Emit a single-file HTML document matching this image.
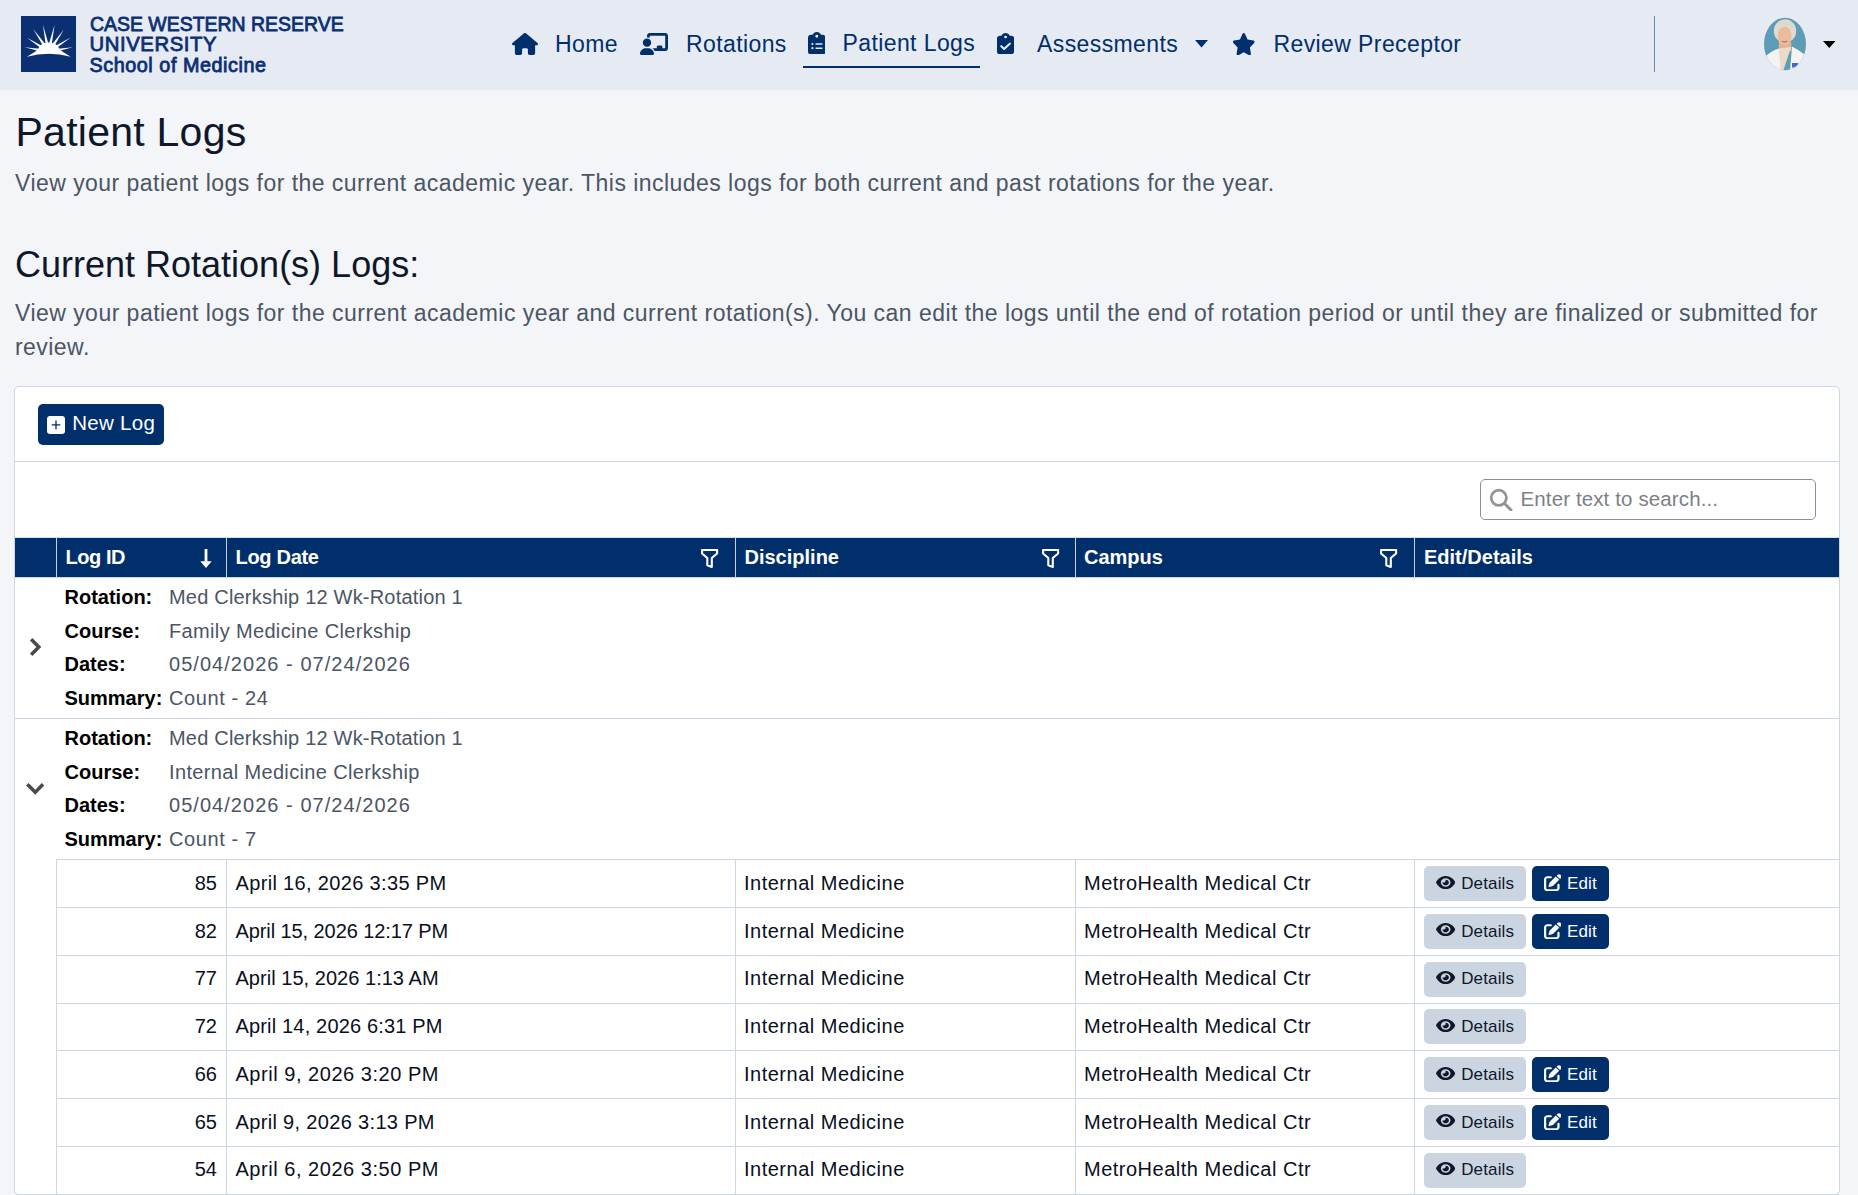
<!DOCTYPE html>
<html><head><meta charset="utf-8"><style>
*{box-sizing:border-box;margin:0;padding:0}
html,body{width:1858px;height:1195px;overflow:hidden}
body{background:#f4f5f9;font-family:"Liberation Sans",sans-serif;position:relative}
.t{position:absolute;white-space:nowrap;line-height:1}
.ic{position:absolute;display:block}
.bx{position:absolute}
</style></head><body>
<div class="bx" style="left:0;top:0;width:1858px;height:89.6px;background:#e6eaf2"></div>
<svg class="ic" style="left:21px;top:16px;width:55px;height:56px" viewBox="0 0 55 56"><rect width="55" height="56" fill="#0b2f73"/><polygon fill="#fff" points="3.6,31.3 28.0,33.7 27.4,37.5"/><polygon fill="#fff" points="6.0,21.7 28.7,34.0 26.7,37.2"/><polygon fill="#fff" points="12.2,13.1 29.3,34.5 26.1,36.7"/><polygon fill="#fff" points="21.9,8.8 29.6,35.2 25.8,36.0"/><polygon fill="#fff" points="33.6,8.8 29.6,36.0 25.8,35.2"/><polygon fill="#fff" points="42.7,13.7 29.3,36.7 26.1,34.5"/><polygon fill="#fff" points="49.7,21.4 28.7,37.2 26.7,34.0"/><polygon fill="#fff" points="51.8,31.3 28.0,37.5 27.4,33.7"/>
<path fill="#fff" d="M5.9 40.7 Q16 35 17 33 A11.5 10 0 0 1 38.5 33 Q40 35 49.7 40.7 Q27.7 34.8 5.9 40.7Z"/></svg>
<div class="t" style="left:89.5px;top:13.5px;font-size:20.3px;color:#0b2f73;font-weight:normal;-webkit-text-stroke:0.8px #0b2f73;letter-spacing:0px;transform:scaleX(0.959);transform-origin:0 0">CASE WESTERN RESERVE</div>

<div class="t" style="left:89.5px;top:34.2px;font-size:20.3px;color:#0b2f73;font-weight:normal;-webkit-text-stroke:0.8px #0b2f73;letter-spacing:0.6px">UNIVERSITY</div>

<div class="t" style="left:89.5px;top:56.0px;font-size:19.8px;color:#0b2f73;font-weight:normal;-webkit-text-stroke:0.8px #0b2f73;letter-spacing:0.55px">School of Medicine</div>

<svg class="ic" style="left:511.5px;top:32.6px;width:26px;height:22px;" viewBox="0 0 576 512" preserveAspectRatio="none"><path fill="#002f6c" d="M575.8 255.5c0 18-15 32.1-32 32.1h-32l.7 160.2c0 2.7-.2 5.4-.5 8.1V472c0 22.1-17.9 40-40 40H456c-1.1 0-2.2 0-3.3-.1c-1.4 .1-2.8 .1-4.2 .1H416 392c-22.1 0-40-17.9-40-40V448 384c0-17.7-14.3-32-32-32H256c-17.7 0-32 14.3-32 32v64 24c0 22.1-17.9 40-40 40H160 128.1c-1.5 0-3-.1-4.5-.2c-1.2 .1-2.4 .2-3.6 .2H104c-22.1 0-40-17.9-40-40V360c0-.9 0-1.9 .1-2.8V287.6H32c-18 0-32-14-32-32.1c0-9 3-17 10-24L266.4 8c7-7 15-8 22-8s15 2 21 7L564.8 231.5c8 7 12 15 11 24z"/></svg>

<div class="t" style="left:555px;top:32.5px;font-size:23px;color:#002f6c;font-weight:normal;letter-spacing:0.4px">Home</div>

<svg class="ic" style="left:640px;top:33px;width:28px;height:22px;" viewBox="0 0 640 512" preserveAspectRatio="none"><path fill="#002f6c" d="M160 64c0-35.3 28.7-64 64-64H576c35.3 0 64 28.7 64 64V352c0 35.3-28.7 64-64 64H336.8c-11.8-25.5-29.9-47.5-52.4-64H384V320c0-17.7 14.3-32 32-32h64c17.7 0 32 14.3 32 32v32h64V64L224 64v49.1C205.2 102.2 183.3 96 160 96V64zm0 64a96 96 0 1 1 0 192 96 96 0 1 1 0-192zM133.3 352h53.3C260.3 352 320 411.7 320 485.3c0 14.7-11.9 26.7-26.7 26.7H26.7C11.9 512 0 500.1 0 485.3C0 411.7 59.7 352 133.3 352z"/></svg>

<div class="t" style="left:686px;top:32.5px;font-size:23px;color:#002f6c;font-weight:normal;letter-spacing:0.4px">Rotations</div>

<svg class="ic" style="left:807.6px;top:31.5px;width:17.6px;height:22.5px;" viewBox="0 0 384 512" preserveAspectRatio="none"><path fill="#002f6c" d="M192 0c-41.8 0-77.4 26.7-90.5 64H64C28.7 64 0 92.7 0 128V448c0 35.3 28.7 64 64 64H320c35.3 0 64-28.7 64-64V128c0-35.3-28.7-64-64-64H282.5C269.4 26.7 233.8 0 192 0zm0 64a32 32 0 1 1 0 64 32 32 0 1 1 0-64zM72 272a24 24 0 1 1 48 0 24 24 0 1 1 -48 0zm104-16H304c8.8 0 16 7.2 16 16s-7.2 16-16 16H176c-8.8 0-16-7.2-16-16s7.2-16 16-16zM72 368a24 24 0 1 1 48 0 24 24 0 1 1 -48 0zm88 0c0-8.8 7.2-16 16-16H304c8.8 0 16 7.2 16 16s-7.2 16-16 16H176c-8.8 0-16-7.2-16-16z"/></svg>

<div class="t" style="left:842.5px;top:31.5px;font-size:23px;color:#002f6c;font-weight:normal;letter-spacing:0.4px">Patient Logs</div>

<div class="bx" style="left:803px;top:65.5px;width:177px;height:2.5px;background:#002f6c"></div>
<svg class="ic" style="left:996.7px;top:33px;width:17.2px;height:21.3px;" viewBox="0 0 384 512" preserveAspectRatio="none"><path fill="#002f6c" d="M192 0c-41.8 0-77.4 26.7-90.5 64H64C28.7 64 0 92.7 0 128V448c0 35.3 28.7 64 64 64H320c35.3 0 64-28.7 64-64V128c0-35.3-28.7-64-64-64H282.5C269.4 26.7 233.8 0 192 0zm0 64a32 32 0 1 1 0 64 32 32 0 1 1 0-64zM305 273L177 401c-9.4 9.4-24.6 9.4-33.9 0L79 337c-9.4-9.4-9.4-24.6 0-33.9s24.6-9.4 33.9 0l47 47L271 239c9.4-9.4 24.6-9.4 33.9 0s9.4 24.6 0 33.9z"/></svg>

<div class="t" style="left:1037px;top:32.5px;font-size:23px;color:#002f6c;font-weight:normal;letter-spacing:0.4px">Assessments</div>

<svg class="ic" style="left:1195px;top:40px;width:13px;height:7.5px" viewBox="0 0 13 7.5"><path fill="#002f6c" d="M0 0H13L6.5 7.5Z"/></svg>
<svg class="ic" style="left:1231.5px;top:32.8px;width:23.5px;height:22.4px;" viewBox="0 0 576 512" preserveAspectRatio="none"><path fill="#002f6c" d="M316.9 18C311.6 7 300.4 0 288.1 0s-23.4 7-28.8 18L195 150.3 51.4 171.5c-12 1.8-22 10.2-25.7 21.7s-.7 24.2 7.9 32.7L137.8 329 113.2 474.7c-2 12 3 24.2 12.9 31.3s23 8 33.8 2.3l128.3-68.5 128.3 68.5c10.8 5.7 23.9 4.9 33.8-2.3s14.9-19.3 12.9-31.3L438.5 329 542.7 225.9c8.6-8.5 11.7-21.2 7.9-32.7s-13.7-19.9-25.7-21.7L381.2 150.3 316.9 18z"/></svg>

<div class="t" style="left:1273.5px;top:32.5px;font-size:23px;color:#002f6c;font-weight:normal;letter-spacing:0.4px">Review Preceptor</div>

<div class="bx" style="left:1654px;top:16px;width:1px;height:56px;background:#6f86b6"></div>
<svg class="ic" style="left:1763px;top:17px;width:44px;height:54px" viewBox="0 0 44 54">
<defs><clipPath id="av"><ellipse cx="22" cy="27" rx="21" ry="26.2"/></clipPath></defs>
<g clip-path="url(#av)">
<rect width="44" height="54" fill="#5d9cb6"/>
<ellipse cx="22" cy="14" rx="11.2" ry="11.8" fill="#dedbd3"/>
<rect x="15.8" y="25" width="12.4" height="9" fill="#dfb395"/>
<ellipse cx="21.6" cy="19" rx="7" ry="9.4" fill="#e9bd9c"/>
<path d="M13 14 Q15 3 23 3.5 Q31 4 31.5 13 Q26 8 21 9.5 Q16 10 13 14Z" fill="#dcd9d0"/>
<path d="M19 24.3 Q21.6 25.6 24.2 24.3" stroke="#c2605a" stroke-width="1.1" fill="none"/>
<path d="M0 40 L3.4 38.5 Q10 33 16 31.5 L19.5 53 L27 54 L29 29.4 Q36 33 41.5 37.4 L44 40 V54 H0Z" fill="#f3f3f1"/>
<path d="M16 31.5 L28.5 29.8 L25.5 38 L20.5 53 L17.5 53Z" fill="#eadbc7"/>
<rect x="29" y="46" width="6" height="4.5" fill="#4f63c4"/>
</g></svg>
<svg class="ic" style="left:1822.5px;top:40.5px;width:12.5px;height:7px" viewBox="0 0 12.5 7"><path fill="#000" d="M0 0H12.5L6.25 7Z"/></svg>
<div class="t" style="left:15.5px;top:111.8px;font-size:41px;color:#0f172a;font-weight:normal;letter-spacing:0.25px">Patient Logs</div>

<div class="t" style="left:15px;top:172.2px;font-size:23px;color:#4b5563;font-weight:normal;letter-spacing:0.46px">View your patient logs for the current academic year. This includes logs for both current and past rotations for the year.</div>

<div class="t" style="left:15px;top:246.7px;font-size:36px;color:#0f172a;font-weight:normal;">Current Rotation(s) Logs:</div>

<div class="t" style="left:15px;top:302.1px;font-size:23px;color:#4b5563;font-weight:normal;letter-spacing:0.466px">View your patient logs for the current academic year and current rotation(s). You can edit the logs until the end of rotation period or until they are finalized or submitted for</div>

<div class="t" style="left:15px;top:335.9px;font-size:23px;color:#4b5563;font-weight:normal;letter-spacing:0.45px">review.</div>

<div class="bx" style="left:14px;top:386px;width:1826px;height:809px;background:#fff;border:1px solid #cdd6e3;border-radius:5px"></div>
<div class="bx" style="left:15px;top:461px;width:1824px;height:1px;background:#cdd6e3"></div>
<div class="bx" style="left:38px;top:404px;width:126px;height:40.5px;background:#002f6c;border-radius:5px"></div>
<svg class="ic" style="left:47px;top:415.5px;width:18px;height:18px" viewBox="0 0 18 18"><rect width="18" height="18" rx="3" fill="#fff"/><path d="M9 4.6V13.2M4.7 8.9H13.3" stroke="#002f6c" stroke-width="1.3"/></svg>
<div class="t" style="left:72.2px;top:412.8px;font-size:20.5px;color:#fff;font-weight:normal;letter-spacing:0.3px">New Log</div>

<div class="bx" style="left:1480px;top:479px;width:336px;height:41px;border:1px solid #8c8f94;border-radius:5px;background:#fff"></div>
<svg class="ic" style="left:1489px;top:487.5px;width:24px;height:23px" viewBox="0 0 24 23"><circle cx="9.8" cy="9.8" r="7.6" fill="none" stroke="#949494" stroke-width="2.8"/><path d="M15.3 15.3L22 22" stroke="#949494" stroke-width="3" stroke-linecap="round"/></svg>
<div class="t" style="left:1520.5px;top:489.1px;font-size:20.5px;color:#7b7f86;font-weight:normal;letter-spacing:0.12px">Enter text to search...</div>

<div class="bx" style="left:15px;top:538px;width:1824px;height:39px;background:#002f6c"></div>
<div class="bx" style="left:15px;top:537px;width:1824px;height:1px;background:#d9dfe8"></div>
<div class="bx" style="left:15px;top:577px;width:1824px;height:1px;background:#cdd6e3"></div>
<div class="bx" style="left:56px;top:537px;width:1px;height:41px;background:#c9d1de"></div>
<div class="bx" style="left:226px;top:537px;width:1px;height:41px;background:#c9d1de"></div>
<div class="bx" style="left:735px;top:537px;width:1px;height:41px;background:#c9d1de"></div>
<div class="bx" style="left:1075px;top:537px;width:1px;height:41px;background:#c9d1de"></div>
<div class="bx" style="left:1414px;top:537px;width:1px;height:41px;background:#c9d1de"></div>
<div class="t" style="left:65.5px;top:547.0px;font-size:20px;color:#fff;font-weight:bold;letter-spacing:-0.45px">Log ID</div>

<div class="t" style="left:235.5px;top:547.0px;font-size:20px;color:#fff;font-weight:bold;letter-spacing:-0.3px">Log Date</div>

<div class="t" style="left:744.5px;top:547.0px;font-size:20px;color:#fff;font-weight:bold;">Discipline</div>

<div class="t" style="left:1084px;top:547.0px;font-size:20px;color:#fff;font-weight:bold;">Campus</div>

<div class="t" style="left:1424px;top:547.0px;font-size:20px;color:#fff;font-weight:bold;">Edit/Details</div>

<svg class="ic" style="left:200px;top:548.5px;width:12px;height:19px" viewBox="0 0 12 19"><path d="M6 0V14" stroke="#fff" stroke-width="2.8"/><path d="M0.3 12.2L6 19L11.7 12.2Z" fill="#fff"/></svg>
<svg class="ic" style="left:700.9px;top:548.5px;width:18px;height:20px" viewBox="0 0 18 20"><path d="M1.1 1H16.1V4.5L10.8 9V18L6.3 16.3V9L1.1 4.5Z" fill="none" stroke="#fff" stroke-width="2.1" stroke-linejoin="round"/></svg>
<svg class="ic" style="left:1041.5px;top:548.5px;width:18px;height:20px" viewBox="0 0 18 20"><path d="M1.1 1H16.1V4.5L10.8 9V18L6.3 16.3V9L1.1 4.5Z" fill="none" stroke="#fff" stroke-width="2.1" stroke-linejoin="round"/></svg>
<svg class="ic" style="left:1380.1px;top:548.5px;width:18px;height:20px" viewBox="0 0 18 20"><path d="M1.1 1H16.1V4.5L10.8 9V18L6.3 16.3V9L1.1 4.5Z" fill="none" stroke="#fff" stroke-width="2.1" stroke-linejoin="round"/></svg>
<div class="t" style="left:64.5px;top:587.2px;font-size:20px;color:#000;font-weight:bold;">Rotation:</div>

<div class="t" style="left:169px;top:587.2px;font-size:20px;color:#4b5563;font-weight:normal;letter-spacing:0.2px">Med Clerkship 12 Wk-Rotation 1</div>

<div class="t" style="left:64.5px;top:621.0px;font-size:20px;color:#000;font-weight:bold;">Course:</div>

<div class="t" style="left:169px;top:621.0px;font-size:20px;color:#4b5563;font-weight:normal;letter-spacing:0.35px">Family Medicine Clerkship</div>

<div class="t" style="left:64.5px;top:654.1px;font-size:20px;color:#000;font-weight:bold;">Dates:</div>

<div class="t" style="left:169px;top:654.1px;font-size:20px;color:#4b5563;font-weight:normal;letter-spacing:1.04px">05/04/2026 - 07/24/2026</div>

<div class="t" style="left:64.5px;top:687.7px;font-size:20px;color:#000;font-weight:bold;">Summary:</div>

<div class="t" style="left:169px;top:687.7px;font-size:20px;color:#4b5563;font-weight:normal;letter-spacing:0.6px">Count - 24</div>

<svg class="ic" style="left:0;top:0px;width:60px;height:700px" viewBox="0 0 60 700"><polygon fill="#4a4a4a" points="32.4,638.0 41.27,647.1 32.4,656.1 29.9,653.6 36.4,647.1 29.9,640.6"/></svg>
<div class="bx" style="left:15px;top:718px;width:1824px;height:1px;background:#cdd6e3"></div>
<div class="t" style="left:64.5px;top:728.2px;font-size:20px;color:#000;font-weight:bold;">Rotation:</div>

<div class="t" style="left:169px;top:728.2px;font-size:20px;color:#4b5563;font-weight:normal;letter-spacing:0.2px">Med Clerkship 12 Wk-Rotation 1</div>

<div class="t" style="left:64.5px;top:762.0px;font-size:20px;color:#000;font-weight:bold;">Course:</div>

<div class="t" style="left:169px;top:762.0px;font-size:20px;color:#4b5563;font-weight:normal;letter-spacing:0.35px">Internal Medicine Clerkship</div>

<div class="t" style="left:64.5px;top:795.1px;font-size:20px;color:#000;font-weight:bold;">Dates:</div>

<div class="t" style="left:169px;top:795.1px;font-size:20px;color:#4b5563;font-weight:normal;letter-spacing:1.04px">05/04/2026 - 07/24/2026</div>

<div class="t" style="left:64.5px;top:828.7px;font-size:20px;color:#000;font-weight:bold;">Summary:</div>

<div class="t" style="left:169px;top:828.7px;font-size:20px;color:#4b5563;font-weight:normal;letter-spacing:0.6px">Count - 7</div>

<svg class="ic" style="left:0;top:0px;width:60px;height:860px" viewBox="0 0 60 860"><polygon fill="#4a4a4a" points="26.04,785.56 28.55,783.05 35.35,789.75 41.77,783.05 44.28,785.56 35.25,794.77"/></svg>
<div class="bx" style="left:56px;top:859px;width:1px;height:340px;background:#cdd6e3"></div>
<div class="bx" style="left:226px;top:859px;width:1px;height:340px;background:#cdd6e3"></div>
<div class="bx" style="left:735px;top:859px;width:1px;height:340px;background:#cdd6e3"></div>
<div class="bx" style="left:1075px;top:859px;width:1px;height:340px;background:#cdd6e3"></div>
<div class="bx" style="left:1414px;top:859px;width:1px;height:340px;background:#cdd6e3"></div>
<div class="bx" style="left:56px;top:859px;width:1783px;height:1px;background:#cdd6e3"></div>
<div class="bx" style="left:56px;top:907px;width:1783px;height:1px;background:#cdd6e3"></div>
<div class="bx" style="left:56px;top:955px;width:1783px;height:1px;background:#cdd6e3"></div>
<div class="bx" style="left:56px;top:1003px;width:1783px;height:1px;background:#cdd6e3"></div>
<div class="bx" style="left:56px;top:1050px;width:1783px;height:1px;background:#cdd6e3"></div>
<div class="bx" style="left:56px;top:1098px;width:1783px;height:1px;background:#cdd6e3"></div>
<div class="bx" style="left:56px;top:1146px;width:1783px;height:1px;background:#cdd6e3"></div>
<div class="bx" style="left:56px;top:1194px;width:1783px;height:1px;background:#cdd6e3"></div>
<div class="t" style="left:101px;width:116px;text-align:right;top:872.80px;font-size:20px;color:#0a0f1c">85</div>
<div class="t" style="left:235.5px;top:872.8px;font-size:20px;color:#0a0f1c;font-weight:normal;letter-spacing:0.34px">April 16, 2026 3:35 PM</div>

<div class="t" style="left:744px;top:872.8px;font-size:20px;color:#0a0f1c;font-weight:normal;letter-spacing:0.5px">Internal Medicine</div>

<div class="t" style="left:1084px;top:872.8px;font-size:20px;color:#0a0f1c;font-weight:normal;letter-spacing:0.5px">MetroHealth Medical Ctr</div>

<div class="bx" style="left:1424px;top:866.1px;width:102px;height:35px;background:#cbd5e1;border-radius:5px"></div>
<svg class="ic" style="left:1435.7px;top:874.7px;width:19.3px;height:15px;" viewBox="0 0 576 512" preserveAspectRatio="none"><path fill="#0f172a" d="M288 32c-80.8 0-145.5 36.8-192.6 80.6C48.6 156 17.3 208 2.5 243.7c-3.3 7.9-3.3 16.7 0 24.6C17.3 304 48.6 356 95.4 399.4C142.5 443.2 207.2 480 288 480s145.5-36.8 192.6-80.6c46.8-43.5 78.1-95.4 93-131.1c3.3-7.9 3.3-16.7 0-24.6c-14.9-35.7-46.2-87.7-93-131.1C433.5 68.8 368.8 32 288 32zM144 256a144 144 0 1 1 288 0 144 144 0 1 1 -288 0zm144-64c0 35.3-28.7 64-64 64c-7.1 0-13.9-1.2-20.3-3.3c-5.5-1.8-11.9 1.6-11.7 7.4c.3 6.9 1.3 13.8 3.2 20.7c13.7 51.2 66.4 81.6 117.6 67.9s81.6-66.4 67.9-117.6c-11.1-41.5-47.8-69.4-88.6-71.1c-5.8-.2-9.2 6.1-7.4 11.7c2.1 6.4 3.3 13.2 3.3 20.3z"/></svg>

<div class="t" style="left:1461.2px;top:875.0px;font-size:17px;color:#0f172a;font-weight:normal;letter-spacing:0.15px">Details</div>

<div class="bx" style="left:1532px;top:866.1px;width:77px;height:35px;background:#002f6c;border-radius:5px"></div>
<svg class="ic" style="left:1543.7px;top:873.9px;width:17.8px;height:17.3px;" viewBox="0 0 512 512" preserveAspectRatio="none"><path fill="#fff" d="M471.6 21.7c-21.9-21.9-57.3-21.9-79.2 0L362.3 51.7l97.9 97.9 30.1-30.1c21.9-21.9 21.9-57.3 0-79.2L471.6 21.7zm-299.2 220c-6.1 6.1-10.8 13.6-13.5 21.9l-29.6 88.8c-2.9 8.6-.6 18.1 5.8 24.6s15.9 8.7 24.6 5.8l88.8-29.6c8.2-2.7 15.7-7.4 21.9-13.5L437.7 172.3 339.7 74.3 172.4 241.7zM96 64C43 64 0 107 0 160V416c0 53 43 96 96 96H352c53 0 96-43 96-96V320c0-17.7-14.3-32-32-32s-32 14.3-32 32v96c0 17.7-14.3 32-32 32H96c-17.7 0-32-14.3-32-32V160c0-17.7 14.3-32 32-32h96c17.7 0 32-14.3 32-32s-14.3-32-32-32H96z"/></svg>

<div class="t" style="left:1567px;top:875.0px;font-size:17px;color:#fff;font-weight:normal;letter-spacing:0.15px">Edit</div>

<div class="t" style="left:101px;width:116px;text-align:right;top:920.54px;font-size:20px;color:#0a0f1c">82</div>
<div class="t" style="left:235.5px;top:920.54px;font-size:20px;color:#0a0f1c;font-weight:normal;letter-spacing:-0.086px">April 15, 2026 12:17 PM</div>

<div class="t" style="left:744px;top:920.54px;font-size:20px;color:#0a0f1c;font-weight:normal;letter-spacing:0.5px">Internal Medicine</div>

<div class="t" style="left:1084px;top:920.54px;font-size:20px;color:#0a0f1c;font-weight:normal;letter-spacing:0.5px">MetroHealth Medical Ctr</div>

<div class="bx" style="left:1424px;top:913.84px;width:102px;height:35px;background:#cbd5e1;border-radius:5px"></div>
<svg class="ic" style="left:1435.7px;top:922.44px;width:19.3px;height:15px;" viewBox="0 0 576 512" preserveAspectRatio="none"><path fill="#0f172a" d="M288 32c-80.8 0-145.5 36.8-192.6 80.6C48.6 156 17.3 208 2.5 243.7c-3.3 7.9-3.3 16.7 0 24.6C17.3 304 48.6 356 95.4 399.4C142.5 443.2 207.2 480 288 480s145.5-36.8 192.6-80.6c46.8-43.5 78.1-95.4 93-131.1c3.3-7.9 3.3-16.7 0-24.6c-14.9-35.7-46.2-87.7-93-131.1C433.5 68.8 368.8 32 288 32zM144 256a144 144 0 1 1 288 0 144 144 0 1 1 -288 0zm144-64c0 35.3-28.7 64-64 64c-7.1 0-13.9-1.2-20.3-3.3c-5.5-1.8-11.9 1.6-11.7 7.4c.3 6.9 1.3 13.8 3.2 20.7c13.7 51.2 66.4 81.6 117.6 67.9s81.6-66.4 67.9-117.6c-11.1-41.5-47.8-69.4-88.6-71.1c-5.8-.2-9.2 6.1-7.4 11.7c2.1 6.4 3.3 13.2 3.3 20.3z"/></svg>

<div class="t" style="left:1461.2px;top:922.74px;font-size:17px;color:#0f172a;font-weight:normal;letter-spacing:0.15px">Details</div>

<div class="bx" style="left:1532px;top:913.84px;width:77px;height:35px;background:#002f6c;border-radius:5px"></div>
<svg class="ic" style="left:1543.7px;top:921.64px;width:17.8px;height:17.3px;" viewBox="0 0 512 512" preserveAspectRatio="none"><path fill="#fff" d="M471.6 21.7c-21.9-21.9-57.3-21.9-79.2 0L362.3 51.7l97.9 97.9 30.1-30.1c21.9-21.9 21.9-57.3 0-79.2L471.6 21.7zm-299.2 220c-6.1 6.1-10.8 13.6-13.5 21.9l-29.6 88.8c-2.9 8.6-.6 18.1 5.8 24.6s15.9 8.7 24.6 5.8l88.8-29.6c8.2-2.7 15.7-7.4 21.9-13.5L437.7 172.3 339.7 74.3 172.4 241.7zM96 64C43 64 0 107 0 160V416c0 53 43 96 96 96H352c53 0 96-43 96-96V320c0-17.7-14.3-32-32-32s-32 14.3-32 32v96c0 17.7-14.3 32-32 32H96c-17.7 0-32-14.3-32-32V160c0-17.7 14.3-32 32-32h96c17.7 0 32-14.3 32-32s-14.3-32-32-32H96z"/></svg>

<div class="t" style="left:1567px;top:922.74px;font-size:17px;color:#fff;font-weight:normal;letter-spacing:0.15px">Edit</div>

<div class="t" style="left:101px;width:116px;text-align:right;top:968.28px;font-size:20px;color:#0a0f1c">77</div>
<div class="t" style="left:235.5px;top:968.28px;font-size:20px;color:#0a0f1c;font-weight:normal;letter-spacing:0.033px">April 15, 2026 1:13 AM</div>

<div class="t" style="left:744px;top:968.28px;font-size:20px;color:#0a0f1c;font-weight:normal;letter-spacing:0.5px">Internal Medicine</div>

<div class="t" style="left:1084px;top:968.28px;font-size:20px;color:#0a0f1c;font-weight:normal;letter-spacing:0.5px">MetroHealth Medical Ctr</div>

<div class="bx" style="left:1424px;top:961.58px;width:102px;height:35px;background:#cbd5e1;border-radius:5px"></div>
<svg class="ic" style="left:1435.7px;top:970.18px;width:19.3px;height:15px;" viewBox="0 0 576 512" preserveAspectRatio="none"><path fill="#0f172a" d="M288 32c-80.8 0-145.5 36.8-192.6 80.6C48.6 156 17.3 208 2.5 243.7c-3.3 7.9-3.3 16.7 0 24.6C17.3 304 48.6 356 95.4 399.4C142.5 443.2 207.2 480 288 480s145.5-36.8 192.6-80.6c46.8-43.5 78.1-95.4 93-131.1c3.3-7.9 3.3-16.7 0-24.6c-14.9-35.7-46.2-87.7-93-131.1C433.5 68.8 368.8 32 288 32zM144 256a144 144 0 1 1 288 0 144 144 0 1 1 -288 0zm144-64c0 35.3-28.7 64-64 64c-7.1 0-13.9-1.2-20.3-3.3c-5.5-1.8-11.9 1.6-11.7 7.4c.3 6.9 1.3 13.8 3.2 20.7c13.7 51.2 66.4 81.6 117.6 67.9s81.6-66.4 67.9-117.6c-11.1-41.5-47.8-69.4-88.6-71.1c-5.8-.2-9.2 6.1-7.4 11.7c2.1 6.4 3.3 13.2 3.3 20.3z"/></svg>

<div class="t" style="left:1461.2px;top:970.48px;font-size:17px;color:#0f172a;font-weight:normal;letter-spacing:0.15px">Details</div>

<div class="t" style="left:101px;width:116px;text-align:right;top:1016.02px;font-size:20px;color:#0a0f1c">72</div>
<div class="t" style="left:235.5px;top:1016.02px;font-size:20px;color:#0a0f1c;font-weight:normal;letter-spacing:0.167px">April 14, 2026 6:31 PM</div>

<div class="t" style="left:744px;top:1016.02px;font-size:20px;color:#0a0f1c;font-weight:normal;letter-spacing:0.5px">Internal Medicine</div>

<div class="t" style="left:1084px;top:1016.02px;font-size:20px;color:#0a0f1c;font-weight:normal;letter-spacing:0.5px">MetroHealth Medical Ctr</div>

<div class="bx" style="left:1424px;top:1009.32px;width:102px;height:35px;background:#cbd5e1;border-radius:5px"></div>
<svg class="ic" style="left:1435.7px;top:1017.92px;width:19.3px;height:15px;" viewBox="0 0 576 512" preserveAspectRatio="none"><path fill="#0f172a" d="M288 32c-80.8 0-145.5 36.8-192.6 80.6C48.6 156 17.3 208 2.5 243.7c-3.3 7.9-3.3 16.7 0 24.6C17.3 304 48.6 356 95.4 399.4C142.5 443.2 207.2 480 288 480s145.5-36.8 192.6-80.6c46.8-43.5 78.1-95.4 93-131.1c3.3-7.9 3.3-16.7 0-24.6c-14.9-35.7-46.2-87.7-93-131.1C433.5 68.8 368.8 32 288 32zM144 256a144 144 0 1 1 288 0 144 144 0 1 1 -288 0zm144-64c0 35.3-28.7 64-64 64c-7.1 0-13.9-1.2-20.3-3.3c-5.5-1.8-11.9 1.6-11.7 7.4c.3 6.9 1.3 13.8 3.2 20.7c13.7 51.2 66.4 81.6 117.6 67.9s81.6-66.4 67.9-117.6c-11.1-41.5-47.8-69.4-88.6-71.1c-5.8-.2-9.2 6.1-7.4 11.7c2.1 6.4 3.3 13.2 3.3 20.3z"/></svg>

<div class="t" style="left:1461.2px;top:1018.22px;font-size:17px;color:#0f172a;font-weight:normal;letter-spacing:0.15px">Details</div>

<div class="t" style="left:101px;width:116px;text-align:right;top:1063.76px;font-size:20px;color:#0a0f1c">66</div>
<div class="t" style="left:235.5px;top:1063.76px;font-size:20px;color:#0a0f1c;font-weight:normal;letter-spacing:0.53px">April 9, 2026 3:20 PM</div>

<div class="t" style="left:744px;top:1063.76px;font-size:20px;color:#0a0f1c;font-weight:normal;letter-spacing:0.5px">Internal Medicine</div>

<div class="t" style="left:1084px;top:1063.76px;font-size:20px;color:#0a0f1c;font-weight:normal;letter-spacing:0.5px">MetroHealth Medical Ctr</div>

<div class="bx" style="left:1424px;top:1057.06px;width:102px;height:35px;background:#cbd5e1;border-radius:5px"></div>
<svg class="ic" style="left:1435.7px;top:1065.66px;width:19.3px;height:15px;" viewBox="0 0 576 512" preserveAspectRatio="none"><path fill="#0f172a" d="M288 32c-80.8 0-145.5 36.8-192.6 80.6C48.6 156 17.3 208 2.5 243.7c-3.3 7.9-3.3 16.7 0 24.6C17.3 304 48.6 356 95.4 399.4C142.5 443.2 207.2 480 288 480s145.5-36.8 192.6-80.6c46.8-43.5 78.1-95.4 93-131.1c3.3-7.9 3.3-16.7 0-24.6c-14.9-35.7-46.2-87.7-93-131.1C433.5 68.8 368.8 32 288 32zM144 256a144 144 0 1 1 288 0 144 144 0 1 1 -288 0zm144-64c0 35.3-28.7 64-64 64c-7.1 0-13.9-1.2-20.3-3.3c-5.5-1.8-11.9 1.6-11.7 7.4c.3 6.9 1.3 13.8 3.2 20.7c13.7 51.2 66.4 81.6 117.6 67.9s81.6-66.4 67.9-117.6c-11.1-41.5-47.8-69.4-88.6-71.1c-5.8-.2-9.2 6.1-7.4 11.7c2.1 6.4 3.3 13.2 3.3 20.3z"/></svg>

<div class="t" style="left:1461.2px;top:1065.96px;font-size:17px;color:#0f172a;font-weight:normal;letter-spacing:0.15px">Details</div>

<div class="bx" style="left:1532px;top:1057.06px;width:77px;height:35px;background:#002f6c;border-radius:5px"></div>
<svg class="ic" style="left:1543.7px;top:1064.86px;width:17.8px;height:17.3px;" viewBox="0 0 512 512" preserveAspectRatio="none"><path fill="#fff" d="M471.6 21.7c-21.9-21.9-57.3-21.9-79.2 0L362.3 51.7l97.9 97.9 30.1-30.1c21.9-21.9 21.9-57.3 0-79.2L471.6 21.7zm-299.2 220c-6.1 6.1-10.8 13.6-13.5 21.9l-29.6 88.8c-2.9 8.6-.6 18.1 5.8 24.6s15.9 8.7 24.6 5.8l88.8-29.6c8.2-2.7 15.7-7.4 21.9-13.5L437.7 172.3 339.7 74.3 172.4 241.7zM96 64C43 64 0 107 0 160V416c0 53 43 96 96 96H352c53 0 96-43 96-96V320c0-17.7-14.3-32-32-32s-32 14.3-32 32v96c0 17.7-14.3 32-32 32H96c-17.7 0-32-14.3-32-32V160c0-17.7 14.3-32 32-32h96c17.7 0 32-14.3 32-32s-14.3-32-32-32H96z"/></svg>

<div class="t" style="left:1567px;top:1065.96px;font-size:17px;color:#fff;font-weight:normal;letter-spacing:0.15px">Edit</div>

<div class="t" style="left:101px;width:116px;text-align:right;top:1111.50px;font-size:20px;color:#0a0f1c">65</div>
<div class="t" style="left:235.5px;top:1111.5px;font-size:20px;color:#0a0f1c;font-weight:normal;letter-spacing:0.335px">April 9, 2026 3:13 PM</div>

<div class="t" style="left:744px;top:1111.5px;font-size:20px;color:#0a0f1c;font-weight:normal;letter-spacing:0.5px">Internal Medicine</div>

<div class="t" style="left:1084px;top:1111.5px;font-size:20px;color:#0a0f1c;font-weight:normal;letter-spacing:0.5px">MetroHealth Medical Ctr</div>

<div class="bx" style="left:1424px;top:1104.8px;width:102px;height:35px;background:#cbd5e1;border-radius:5px"></div>
<svg class="ic" style="left:1435.7px;top:1113.4px;width:19.3px;height:15px;" viewBox="0 0 576 512" preserveAspectRatio="none"><path fill="#0f172a" d="M288 32c-80.8 0-145.5 36.8-192.6 80.6C48.6 156 17.3 208 2.5 243.7c-3.3 7.9-3.3 16.7 0 24.6C17.3 304 48.6 356 95.4 399.4C142.5 443.2 207.2 480 288 480s145.5-36.8 192.6-80.6c46.8-43.5 78.1-95.4 93-131.1c3.3-7.9 3.3-16.7 0-24.6c-14.9-35.7-46.2-87.7-93-131.1C433.5 68.8 368.8 32 288 32zM144 256a144 144 0 1 1 288 0 144 144 0 1 1 -288 0zm144-64c0 35.3-28.7 64-64 64c-7.1 0-13.9-1.2-20.3-3.3c-5.5-1.8-11.9 1.6-11.7 7.4c.3 6.9 1.3 13.8 3.2 20.7c13.7 51.2 66.4 81.6 117.6 67.9s81.6-66.4 67.9-117.6c-11.1-41.5-47.8-69.4-88.6-71.1c-5.8-.2-9.2 6.1-7.4 11.7c2.1 6.4 3.3 13.2 3.3 20.3z"/></svg>

<div class="t" style="left:1461.2px;top:1113.7px;font-size:17px;color:#0f172a;font-weight:normal;letter-spacing:0.15px">Details</div>

<div class="bx" style="left:1532px;top:1104.8px;width:77px;height:35px;background:#002f6c;border-radius:5px"></div>
<svg class="ic" style="left:1543.7px;top:1112.6px;width:17.8px;height:17.3px;" viewBox="0 0 512 512" preserveAspectRatio="none"><path fill="#fff" d="M471.6 21.7c-21.9-21.9-57.3-21.9-79.2 0L362.3 51.7l97.9 97.9 30.1-30.1c21.9-21.9 21.9-57.3 0-79.2L471.6 21.7zm-299.2 220c-6.1 6.1-10.8 13.6-13.5 21.9l-29.6 88.8c-2.9 8.6-.6 18.1 5.8 24.6s15.9 8.7 24.6 5.8l88.8-29.6c8.2-2.7 15.7-7.4 21.9-13.5L437.7 172.3 339.7 74.3 172.4 241.7zM96 64C43 64 0 107 0 160V416c0 53 43 96 96 96H352c53 0 96-43 96-96V320c0-17.7-14.3-32-32-32s-32 14.3-32 32v96c0 17.7-14.3 32-32 32H96c-17.7 0-32-14.3-32-32V160c0-17.7 14.3-32 32-32h96c17.7 0 32-14.3 32-32s-14.3-32-32-32H96z"/></svg>

<div class="t" style="left:1567px;top:1113.7px;font-size:17px;color:#fff;font-weight:normal;letter-spacing:0.15px">Edit</div>

<div class="t" style="left:101px;width:116px;text-align:right;top:1159.24px;font-size:20px;color:#0a0f1c">54</div>
<div class="t" style="left:235.5px;top:1159.24px;font-size:20px;color:#0a0f1c;font-weight:normal;letter-spacing:0.53px">April 6, 2026 3:50 PM</div>

<div class="t" style="left:744px;top:1159.24px;font-size:20px;color:#0a0f1c;font-weight:normal;letter-spacing:0.5px">Internal Medicine</div>

<div class="t" style="left:1084px;top:1159.24px;font-size:20px;color:#0a0f1c;font-weight:normal;letter-spacing:0.5px">MetroHealth Medical Ctr</div>

<div class="bx" style="left:1424px;top:1152.54px;width:102px;height:35px;background:#cbd5e1;border-radius:5px"></div>
<svg class="ic" style="left:1435.7px;top:1161.14px;width:19.3px;height:15px;" viewBox="0 0 576 512" preserveAspectRatio="none"><path fill="#0f172a" d="M288 32c-80.8 0-145.5 36.8-192.6 80.6C48.6 156 17.3 208 2.5 243.7c-3.3 7.9-3.3 16.7 0 24.6C17.3 304 48.6 356 95.4 399.4C142.5 443.2 207.2 480 288 480s145.5-36.8 192.6-80.6c46.8-43.5 78.1-95.4 93-131.1c3.3-7.9 3.3-16.7 0-24.6c-14.9-35.7-46.2-87.7-93-131.1C433.5 68.8 368.8 32 288 32zM144 256a144 144 0 1 1 288 0 144 144 0 1 1 -288 0zm144-64c0 35.3-28.7 64-64 64c-7.1 0-13.9-1.2-20.3-3.3c-5.5-1.8-11.9 1.6-11.7 7.4c.3 6.9 1.3 13.8 3.2 20.7c13.7 51.2 66.4 81.6 117.6 67.9s81.6-66.4 67.9-117.6c-11.1-41.5-47.8-69.4-88.6-71.1c-5.8-.2-9.2 6.1-7.4 11.7c2.1 6.4 3.3 13.2 3.3 20.3z"/></svg>

<div class="t" style="left:1461.2px;top:1161.44px;font-size:17px;color:#0f172a;font-weight:normal;letter-spacing:0.15px">Details</div>

</body></html>
